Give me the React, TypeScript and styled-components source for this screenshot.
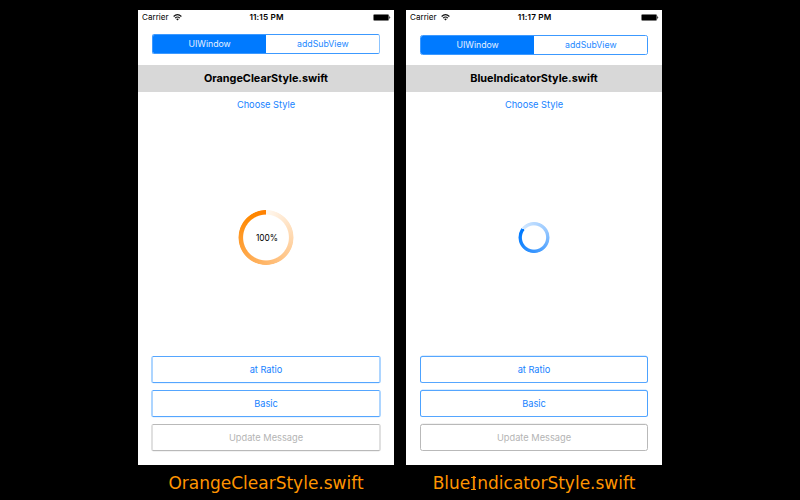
import React from "react";
import styled, { createGlobalStyle } from "styled-components";

const BLUE = "#007aff";

const GlobalStyle = createGlobalStyle`
  body { margin: 0; background: #000; overflow: hidden; }
  * { box-sizing: border-box; }
`;

const Page = styled.main`
  width: 800px;
  height: 500px;
  padding: 10px 138px 0;
  display: flex;
  gap: 12px;
  background: #000;
`;

const Column = styled.section`
  width: 256px;
  display: flex;
  flex-direction: column;
`;

const Screen = styled.div`
  height: 455px;
  display: flex;
  flex-direction: column;
  background: #fff;
  color: #000;
  font-family: Inter, "Liberation Sans", sans-serif;
  font-size: 9.25px;
`;

const StatusBar = styled.header`
  height: 14px;
  flex: none;
  padding: 0 3px 0 4px;
  display: grid;
  grid-template-columns: 1fr auto 1fr;
  align-items: center;
  font-size: 8.1px;
  line-height: 14px;
`;

const Carrier = styled.div`
  display: flex;
  align-items: center;
  gap: 4px;
`;

const Time = styled.div`
  font-size: 8.2px;
  font-weight: 600;
  letter-spacing: 0.14px;
`;

const BatterySlot = styled.div`
  display: flex;
  justify-content: flex-end;
`;

const Segments = styled.div<{ $soft?: boolean }>`
  flex: none;
  height: 20px;
  margin: ${(p) => (p.$soft ? 10 : 11)}px 13.6px 0 14px;
  display: flex;
  border: 1px solid #3c99ff;
  border-right-color: ${(p) => (p.$soft ? "#8cc4ff" : "#3c99ff")};
  border-radius: 2.5px;
  overflow: hidden;
`;

const Segment = styled.div<{ $active?: boolean }>`
  flex: 1;
  display: flex;
  align-items: center;
  justify-content: center;
  font-size: 8.75px;
  background: ${(p) => (p.$active ? BLUE : "#fff")};
  color: ${(p) => (p.$active ? "#e4f1ff" : "#2389ff")};
`;

const Title = styled.h1<{ $soft?: boolean }>`
  flex: none;
  height: 27px;
  margin: ${(p) => (p.$soft ? 11 : 10)}px 0 0;
  padding-bottom: 2px;
  display: flex;
  align-items: center;
  justify-content: center;
  background: #d8d8d8;
  font-size: 10.85px;
  font-weight: 700;
`;

const Choose = styled.div`
  flex: none;
  height: 24px;
  line-height: 25px;
  text-align: center;
  color: #1682ff;
`;

const Stage = styled.div`
  flex: 1;
  display: flex;
  align-items: center;
  justify-content: center;
  padding-top: 3px;
`;

const Ring = styled.div<{ $size: number; $stroke: number; $fill: string }>`
  width: ${(p) => p.$size}px;
  height: ${(p) => p.$size}px;
  display: grid;
  place-items: center;
  position: relative;
  padding-left: 2px;
  font-size: 8.4px;

  &::before {
    content: "";
    position: absolute;
    inset: 0;
    transform: translateY(-0.5px);
    border-radius: 50%;
    background: ${(p) => p.$fill};
    mask: radial-gradient(
      closest-side,
      transparent calc(100% - ${(p) => p.$stroke + 1}px),
      #000 calc(100% - ${(p) => p.$stroke}px),
      #000 calc(100% - 1px),
      transparent 100%
    );
  }
`;

const Buttons = styled.div`
  flex: none;
  padding: 0 14px 14px 14px;
  display: flex;
  flex-direction: column;
  gap: 7px;
`;

const Button = styled.button<{ $disabled?: boolean; $soft?: boolean }>`
  height: 27px;
  margin: 0 ${(p) => (p.$soft ? -1 : 0)}px;
  padding: 0;
  border-style: solid;
  border-width: 1px ${(p) => (p.$soft ? 2 : 1)}px;
  border-color: ${(p) => (p.$disabled ? "#b9b9b9" : "#55a6ff")}
    ${(p) =>
      p.$soft ? (p.$disabled ? "#e0e0e0" : "#add5ff") : p.$disabled ? "#b9b9b9" : "#4ca2ff"};
  border-radius: 2.5px;
  background: #fff;
  color: ${(p) => (p.$disabled ? "#b4b4b4" : "#1682ff")};
  font: inherit;
  box-shadow: ${(p) =>
    p.$soft
      ? `0 1px 0 -0.5px ${p.$disabled ? "#e6e6e6" : "#d6eaff"}`
      : `0 -1px 0 -0.5px ${p.$disabled ? "#e6e6e6" : "#b8dbff"}`};
`;

const Caption = styled.div`
  height: 35px;
  text-align: center;
  white-space: nowrap;
  color: #ff9500;
  font: 17px/37px "DejaVu Sans", sans-serif;
`;

/* Capital I with slab serifs drawn at the cap line and the baseline */
const SlabI = styled.span`
  position: relative;
  display: inline-block;
  line-height: 1;
  padding: 0 1px;

  &::after {
    content: "";
    position: absolute;
    left: 1px;
    right: 1px;
    top: 2px;
    height: 11px;
    border: solid #ff9500;
    border-width: 1px 0;
  }
`;

const Wifi = () => (
  <svg width="9" height="7" viewBox="0 0 9 7" fill="none" stroke="#111">
    <path d="M.6 2.5Q4.5-1.1 8.4 2.5" strokeWidth="1.2" />
    <path d="M2.1 4.1Q4.5 1.9 6.9 4.1" strokeWidth="1.1" />
    <path d="M3.1 5.1Q4.5 3.9 5.9 5.1L4.5 6.6Z" fill="#111" stroke="none" />
  </svg>
);

const Battery = () => (
  <svg width="18" height="7" viewBox="0 0 18 7">
    <rect x=".5" y=".4" width="15.2" height="6.2" rx="1" fill="#000" stroke="#777" strokeWidth=".5" />
    <path d="M16.4 2.5Q17.4 3.5 16.4 4.5Z" fill="#000" stroke="#000" strokeWidth=".4" />
  </svg>
);

interface PhoneProps {
  time: string;
  name: string;
  caption: React.ReactNode;
  soft?: boolean;
  children: React.ReactNode;
}

const Phone = ({ time, name, caption, soft, children }: PhoneProps) => (
  <Column>
    <Screen>
      <StatusBar>
        <Carrier>Carrier <Wifi /></Carrier>
        <Time>{time}</Time>
        <BatterySlot><Battery /></BatterySlot>
      </StatusBar>
      <Segments $soft={soft}>
        <Segment $active>UIWindow</Segment>
        <Segment>addSubView</Segment>
      </Segments>
      <Title $soft={soft}>{name}</Title>
      <Choose>Choose Style</Choose>
      <Stage>{children}</Stage>
      <Buttons>
        <Button $soft={soft}>at Ratio</Button>
        <Button $soft={soft}>Basic</Button>
        <Button $soft={soft} $disabled>Update Message</Button>
      </Buttons>
    </Screen>
    <Caption>{caption}</Caption>
  </Column>
);

export default function App() {
  return (
    <>
      <GlobalStyle />
      <Page>
        <Phone time="11:15 PM" name="OrangeClearStyle.swift" caption="OrangeClearStyle.swift" soft>
          <Ring $size={56} $stroke={4.6} $fill="conic-gradient(#fff8f0, #ffb76b 50%, #ff8800 90%, #ff8000)">
            100%
          </Ring>
        </Phone>
        <Phone
          time="11:17 PM"
          name="BlueIndicatorStyle.swift"
          caption={<>Blue<SlabI>I</SlabI>ndicatorStyle.swift</>}
        >
          <Ring
            $size={32}
            $stroke={3.4}
            $fill="conic-gradient(from -52deg, #d3e8ff, #9bcaff 30%, #3c98ff 62%, #007aff 95%)"
          />
        </Phone>
      </Page>
    </>
  );
}
